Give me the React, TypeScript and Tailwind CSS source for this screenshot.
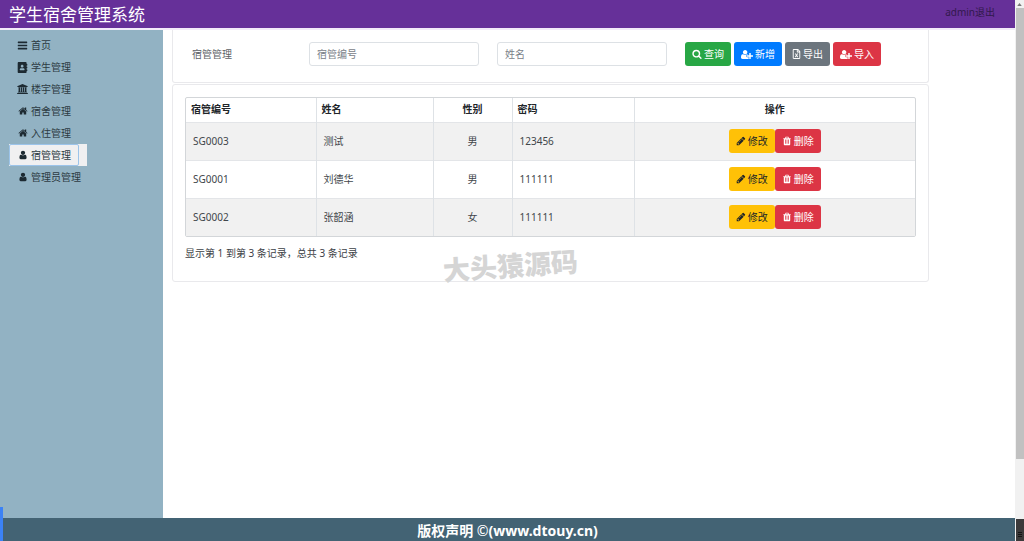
import type { ReactNode } from "react";
import { FaAddressBook, FaRegFileExcel } from "react-icons/fa";

const paths = {
  bars: "M1664 1344v128q0 26-19 45t-45 19h-1408q-26 0-45-19t-19-45v-128q0-26 19-45t45-19h1408q26 0 45 19t19 45zm0-512v128q0 26-19 45t-45 19h-1408q-26 0-45-19t-19-45v-128q0-26 19-45t45-19h1408q26 0 45 19t19 45zm0-512v128q0 26-19 45t-45 19h-1408q-26 0-45-19t-19-45v-128q0-26 19-45t45-19h1408q26 0 45 19t19 45z",
  bank: "M960 0l960 384v128h-128q0 26-20.5 45t-48.5 19h-1526q-28 0-48.5-19t-20.5-45h-128v-128zm-704 640h256v768h128v-768h256v768h128v-768h256v768h128v-768h256v768h59q28 0 48.5 19t20.5 45v64h-1664v-64q0-26 20.5-45t48.5-19h59v-768zm1595 960q28 0 48.5 19t20.5 45v128h-1920v-128q0-26 20.5-45t48.5-19h1782z",
  home: "M1472 992v480q0 26-19 45t-45 19h-384v-384h-256v384h-384q-26 0-45-19t-19-45v-480q0-1 .5-3t.5-3l575-474 575 474q1 2 1 6zm223-69l-62 74q-8 9-21 11h-3q-13 0-21-7l-692-577-692 577q-12 8-24 7-13-2-21-11l-62-74q-8-10-7-23.5t11-21.5l719-599q32-26 76-26t76 26l244 204v-195q0-14 9-23t23-9h192q14 0 23 9t9 23v408l219 182q10 8 11 21.5t-7 23.5z",
  user: "M1536 1399q0 109-62.5 187t-150.5 78h-854q-88 0-150.5-78t-62.5-187q0-85 8.5-160.5t31.5-152 58.5-131 94-89 134.5-34.5q131 128 313 128t313-128q76 0 134.5 34.5t94 89 58.5 131 31.5 152 8.5 160.5zm-256-887q0 159-112.5 271.5t-271.5 112.5-271.5-112.5-112.5-271.5 112.5-271.5 271.5-112.5 271.5 112.5 112.5 271.5z",
  search:
    "M1216 832q0-185-131.5-316.5t-316.5-131.5-316.5 131.5-131.5 316.5 131.5 316.5 316.5 131.5 316.5-131.5 131.5-316.5zm512 832q0 52-38 90t-90 38q-54 0-90-38l-343-342q-179 124-399 124-143 0-273.5-55.5t-225-150-150-225-55.5-273.5 55.5-273.5 150-225 225-150 273.5-55.5 273.5 55.5 225 150 150 225 55.5 273.5q0 220-124 399l343 343q37 37 37 90z",
  userPlus:
    "M704 896q-159 0-271.5-112.5t-112.5-271.5 112.5-271.5 271.5-112.5 271.5 112.5 112.5 271.5-112.5 271.5-271.5 112.5zm960 128h352q13 0 22.5 9.5t9.5 22.5v192q0 13-9.5 22.5t-22.5 9.5h-352v352q0 13-9.5 22.5t-22.5 9.5h-192q-13 0-22.5-9.5t-9.5-22.5v-352h-352q-13 0-22.5-9.5t-9.5-22.5v-192q0-13 9.5-22.5t22.5-9.5h352v-352q0-13 9.5-22.5t22.5-9.5h192q13 0 22.5 9.5t9.5 22.5v352zm-736 224q0 52 38 90t90 38h256v238q-68 50-171 50h-874q-121 0-194-69t-73-190q0-53 3.5-103.5t14-109 26.5-108.5 43-97.5 62-81 85.5-53.5 111.5-20q19 0 39 17 79 61 154.5 91.5t164.5 30.5 164.5-30.5 154.5-91.5q20-17 39-17 132 0 217 96h-223q-52 0-90 38t-38 90v192z",
  pencil:
    "M491 1536l91-91-235-235-91 91v107h128v128h107zm523-928q0-22-22-22-10 0-17 7l-542 542q-7 7-7 17 0 22 22 22 10 0 17-7l542-542q7-7 7-17zm-54-192l416 416-832 832h-416v-416zm683 96q0 53-37 90l-166 166-416-416 166-165q36-38 90-38 53 0 91 38l235 234q37 39 37 91z",
  trash:
    "M704 1376v-704q0-14-9-23t-23-9h-64q-14 0-23 9t-9 23v704q0 14 9 23t23 9h64q14 0 23-9t9-23zm256 0v-704q0-14-9-23t-23-9h-64q-14 0-23 9t-9 23v704q0 14 9 23t23 9h64q14 0 23-9t9-23zm256 0v-704q0-14-9-23t-23-9h-64q-14 0-23 9t-9 23v704q0 14 9 23t23 9h64q14 0 23-9t9-23zm-544-992h448l-48-117q-7-9-17-11h-317q-10 2-17 11zm928 32v64q0 14-9 23t-23 9h-96v948q0 83-47 143.5t-113 60.5h-832q-66 0-113-58.5t-47-141.5v-952h-96q-14 0-23-9t-9-23v-64q0-14 9-23t23-9h309l70-167q15-37 54-63t79-26h320q40 0 79 26t54 63l70 167h309q14 0 23 9t9 23z",
};

const viewBoxes: Partial<Record<keyof typeof paths, string>> = {
  bank: "0 0 1920 1792",
  userPlus: "0 0 2048 1792",
};

const Icon = ({ name, className = "size-[10px]" }: { name: keyof typeof paths; className?: string }) => (
  <svg viewBox={viewBoxes[name] ?? "0 0 1792 1792"} className={className} fill="currentColor" aria-hidden="true">
    <path d={paths[name]} />
  </svg>
);

const menu = [
  { title: "首页", icon: <Icon name="bars" className="size-[11px]" /> },
  { title: "学生管理", icon: <FaAddressBook className="size-[11px]" /> },
  { title: "楼宇管理", icon: <Icon name="bank" className="h-[10px] w-[11px]" /> },
  { title: "宿舍管理", icon: <Icon name="home" /> },
  { title: "入住管理", icon: <Icon name="home" /> },
  { title: "宿管管理", icon: <Icon name="user" />, active: true },
  { title: "管理员管理", icon: <Icon name="user" /> },
];

const rows = [
  { id: "SG0003", name: "测试", sex: "男", password: "123456" },
  { id: "SG0001", name: "刘德华", sex: "男", password: "111111" },
  { id: "SG0002", name: "张韶涵", sex: "女", password: "111111" },
];

interface ButtonProps {
  color: string;
  icon: ReactNode;
  children: ReactNode;
}

const Button = ({ color, icon, children }: ButtonProps) => (
  <button
    type="button"
    className={`flex h-6 items-center gap-[2px] rounded-[3px] px-[7px] text-[10px] leading-4 whitespace-nowrap ${color}`}
  >
    {icon}
    {children}
  </button>
);

const Sidebar = () => (
  <nav className="w-[163px] shrink-0 bg-[#92b2c3] pt-1 pl-[9px]">
    <ul>
      {menu.map((item) => (
        <li key={item.title} className={`w-[78px] ${item.active ? "bg-[#f0f0f1]" : ""}`}>
          <a
            href="#"
            className={`flex h-[22px] items-center gap-[3px] pl-2 whitespace-nowrap text-[#2c3a42] ${
              item.active ? "w-[70px] rounded-[2px] border border-[#9cc4ea] pl-[7px]" : ""
            }`}
          >
            <span className="flex w-[11px] justify-center text-[#1d2a32]">{item.icon}</span>
            {item.title}
          </a>
        </li>
      ))}
    </ul>
  </nav>
);

const SearchPanel = () => {
  const input =
    "h-6 min-w-0 flex-1 rounded-[3px] border border-[#dde1e5] bg-white px-[7px] text-[10px] text-[#495057] placeholder:text-[#7a8188]";

  return (
    <form className="flex h-[53px] items-start rounded-b-[3px] border border-t-0 border-[#e9e9ec] pt-3 pr-[47px] pl-[19px]">
      <span className="w-[117px] shrink-0 leading-6 text-[#5c6166]">宿管管理</span>
      <div className="flex min-w-0 flex-1 gap-[18px]">
        <input aria-label="宿管编号" placeholder="宿管编号" className={input} />
        <input aria-label="姓名" placeholder="姓名" className={input} />
        <div className="flex gap-[3px]">
          <Button color="bg-[#28a745] text-white" icon={<Icon name="search" />}>
            查询
          </Button>
          <Button color="bg-[#007bff] text-white" icon={<Icon name="userPlus" className="h-[11px] w-[12px]" />}>
            新增
          </Button>
          <Button color="bg-[#6c757d] text-white" icon={<FaRegFileExcel className="h-[10px] w-[9px]" />}>
            导出
          </Button>
          <Button color="bg-[#dc3545] text-white" icon={<Icon name="userPlus" className="h-[11px] w-[12px]" />}>
            导入
          </Button>
        </div>
      </div>
    </form>
  );
};

const DataTable = () => (
  <section className="mt-px rounded-[3px] border border-[#e9e9ec] px-3 pt-3 pb-5">
    <div className="overflow-hidden rounded-[2px] border border-[#d3d6d9]">
      <table className="w-full table-fixed border-collapse">
        <colgroup>
          <col className="w-[130px]" />
          <col className="w-[117px]" />
          <col className="w-[79px]" />
          <col className="w-[122px]" />
          <col />
        </colgroup>
        <thead>
          <tr className="h-[24px] text-left text-[#212529] [&>th]:border-r [&>th]:border-[#dee2e6] [&>th]:px-[5px] [&>th:last-child]:border-r-0">
            <th>宿管编号</th>
            <th>姓名</th>
            <th className="text-center">性别</th>
            <th>密码</th>
            <th className="text-center">操作</th>
          </tr>
        </thead>
        <tbody>
          {rows.map((row) => (
            <tr
              key={row.id}
              className="h-[38px] border-t border-[#e3e5e8] text-[#41464b] odd:bg-[#f1f1f1] [&>td]:border-r [&>td]:border-[#dee2e6] [&>td]:px-[7px] [&>td:last-child]:border-r-0"
            >
              <td>{row.id}</td>
              <td>{row.name}</td>
              <td className="text-center">{row.sex}</td>
              <td>{row.password}</td>
              <td>
                <div className="flex justify-center">
                  <Button color="bg-[#ffc107] text-[#212529]" icon={<Icon name="pencil" />}>
                    修改
                  </Button>
                  <Button color="bg-[#dc3545] text-white" icon={<Icon name="trash" />}>
                    删除
                  </Button>
                </div>
              </td>
            </tr>
          ))}
        </tbody>
      </table>
    </div>
    <p className="mt-2 leading-4 text-[#3c4146]">显示第 1 到第 3 条记录，总共 3 条记录</p>
  </section>
);

const Scrollbar = () => (
  <div className="flex w-[9px] shrink-0 flex-col bg-[#f1f1f1]" aria-hidden="true">
    <div className="flex h-2 items-center justify-center">
      <svg viewBox="0 0 6 4" className="h-[3px] w-[5px]" fill="#777">
        <path d="M3 0l3 4H0z" />
      </svg>
    </div>
    <div className="ml-px h-[451px] bg-[#c1c1c1]" />
    <div className="mt-auto ml-px flex h-[22px] flex-col items-center justify-end gap-px bg-[#3c3a3b] pb-1">
      <span className="h-px w-1 bg-[#151515]" />
      <span className="h-px w-1 bg-[#151515]" />
      <span className="h-px w-1 bg-[#151515]" />
    </div>
  </div>
);

export default function App() {
  return (
    <div className="relative flex min-h-screen bg-white font-['Noto_Sans','Noto_Sans_CJK_SC',sans-serif] text-[10px]">
      <div className="flex min-w-0 flex-1 flex-col">
        <header className="flex h-[30px] items-center justify-between border-b-2 border-[#f3ebfa] bg-[#663099] pr-5 pl-[9px]">
          <h1 className="pt-0.5 text-[17px] leading-6 text-white">学生宿舍管理系统</h1>
          <a href="#" className="pb-1 text-[#32194c]">
            admin退出
          </a>
        </header>

        <div className="flex flex-1">
          <Sidebar />
          <main className="min-w-0 flex-1 pr-[86px] pl-[9px]">
            <SearchPanel />
            <DataTable />
          </main>
        </div>

        <footer className="h-[23px] bg-[#436374] pt-px text-center text-[14px] leading-[22px] font-bold text-white">
          版权声明 <span className="font-['Noto_Sans_CJK_SC',sans-serif] font-medium">©</span>(www.dtouy.cn)
        </footer>
      </div>

      <Scrollbar />

      {/* watermark */}
      <div className="pointer-events-none absolute top-[250px] left-[443px] -rotate-4 text-[27px] leading-8 font-black text-[#d5d5d5]">
        大头猿源码
      </div>
      <div className="absolute bottom-0 left-0 h-[34px] w-[3px] bg-[#3b82f6]" />
    </div>
  );
}
